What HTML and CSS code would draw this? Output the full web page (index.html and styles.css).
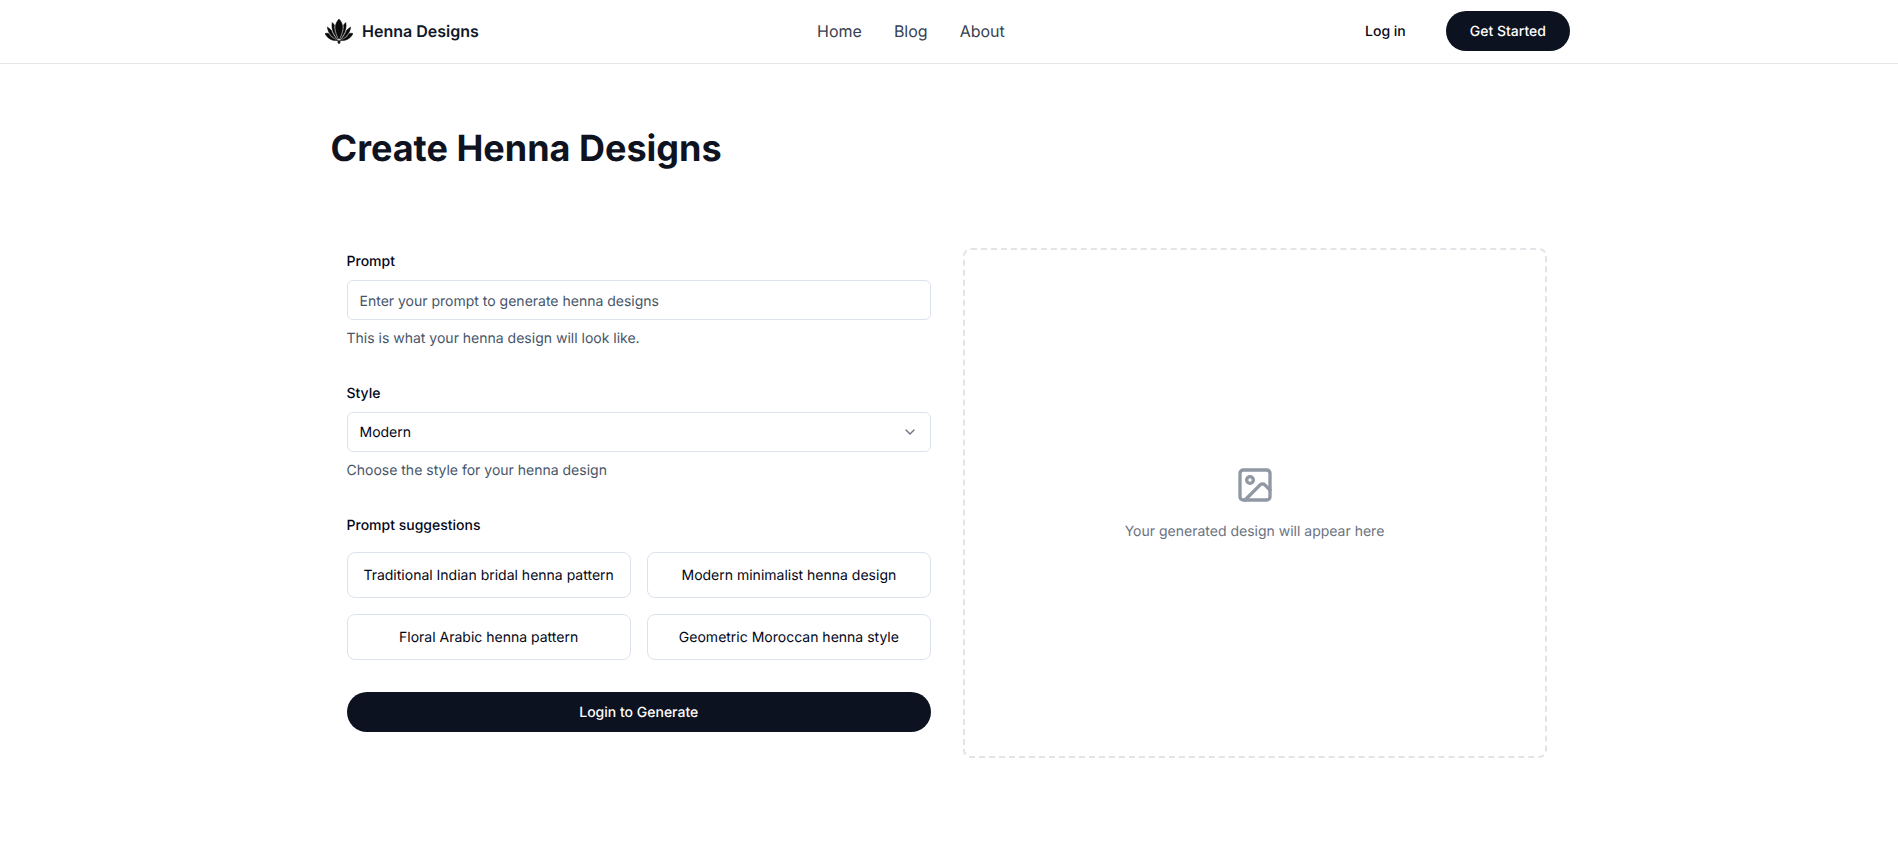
FILE: index.html
```html
<!DOCTYPE html>
<html lang="en">
<head>
<meta charset="utf-8">
<title>Henna Designs</title>
<link rel="stylesheet" href="styles.css">
</head>
<body>
<header class="site-header">
  <div class="nav">
    <a class="brand" href="#">
      <svg class="brand-icon" viewBox="0 0 28 25" aria-hidden="true">
        <path d="M14 0C11.500 2.500 10.200 5.500 10.400 9C10.600 13 12.400 17 13.700 20H14.300C15.600 17 17.400 13 17.600 9C17.800 5.500 16.500 2.500 14 0Z"/>
        <path d="M7.200 3.500C6.400 7.500 7.200 12 9.500 15.500C10.500 17.200 11.700 18.800 12.800 20.300C11.200 16.500 9.500 12.500 9.300 8.800C9.200 8 9.300 7 9.500 6.200C8.900 5.200 8.100 4.300 7.200 3.500Z"/>
        <path d="M20.800 3.500C21.600 7.500 20.800 12 18.500 15.500C17.500 17.200 16.300 18.800 15.200 20.300C16.800 16.500 18.500 12.500 18.700 8.800C18.800 8 18.700 7 18.500 6.200C19.100 5.200 19.900 4.300 20.800 3.500Z"/>
        <path d="M2.300 8C2.600 11.500 4.500 15 7.300 17.500C8.800 18.900 10.600 20 12.200 20.800C10 18.300 7.600 15 6.300 11.200C5.200 10 3.800 8.900 2.300 8Z"/>
        <path d="M25.700 8C25.400 11.500 23.500 15 20.700 17.500C19.200 18.900 17.400 20 15.800 20.800C18 18.300 20.400 15 21.700 11.200C22.800 10 24.200 8.900 25.700 8Z"/>
        <path d="M0 14.500C1.400 17.800 4.300 20.300 7.800 21.200C9.700 21.700 11.500 21.700 13 21.400C9.500 20.500 5.800 18 3.600 14.400C2.400 14.200 1.200 14.200 0 14.500Z"/>
        <path d="M28 14.500C26.600 17.800 23.700 20.300 20.200 21.200C18.300 21.700 16.500 21.700 15 21.400C18.500 20.500 22.200 18 24.400 14.400C25.600 14.200 26.800 14.200 28 14.500Z"/>
        <path d="M14 21L12.600 22.900L14 25L15.400 22.900Z"/>
      </svg>
      <span>Henna Designs</span>
    </a>
    <nav class="nav-links">
      <a href="#">Home</a>
      <a href="#">Blog</a>
      <a href="#">About</a>
    </nav>
    <div class="nav-actions">
      <a class="login" href="#">Log in</a>
      <a class="get-started" href="#">Get Started</a>
    </div>
  </div>
</header>
<main class="page">
  <h1 class="title">Create Henna Designs</h1>
  <div class="columns">
    <form class="form">
      <div class="field">
        <label class="label" for="prompt">Prompt</label>
        <input class="control" id="prompt" type="text" placeholder="Enter your prompt to generate henna designs">
        <p class="hint">This is what your henna design will look like.</p>
      </div>
      <div class="field">
        <span class="label">Style</span>
        <div class="control select">
          <span>Modern</span>
          <svg class="chevron" viewBox="0 0 24 24" aria-hidden="true"><path d="m6 9 6 6 6-6"/></svg>
        </div>
        <p class="hint">Choose the style for your henna design</p>
      </div>
      <div class="suggestions-block">
        <span class="label suggestions-label">Prompt suggestions</span>
        <div class="suggestions">
          <button class="chip" type="button">Traditional Indian bridal henna pattern</button>
          <button class="chip" type="button">Modern minimalist henna design</button>
          <button class="chip" type="button">Floral Arabic henna pattern</button>
          <button class="chip" type="button">Geometric Moroccan henna style</button>
        </div>
      </div>
      <button class="submit" type="button">Login to Generate</button>
    </form>
    <section class="preview">
      <svg class="preview-icon" viewBox="0 0 24 24" aria-hidden="true">
        <rect x="3" y="3" width="18" height="18" rx="2"/>
        <circle cx="9" cy="9" r="2"/>
        <path d="m21 15-3.086-3.086a2 2 0 0 0-2.828 0L6 21"/>
      </svg>
      <p class="preview-text">Your generated design will appear here</p>
    </section>
  </div>
</main>
</body>
</html>
```
FILE: styles.css
```css
* { box-sizing: border-box; text-rendering: geometricPrecision; }
html, body { margin: 0; padding: 0; }
body {
  background: #fff;
  color: #0c1220;
  font-family: Inter, "Liberation Sans", sans-serif;
  font-size: 14px;
  min-height: 848px;
}
a { color: inherit; text-decoration: none; }
.site-header {
  height: 64px;
  border-bottom: 1px solid #e5e7eb;
}
.nav {
  width: 1245px;
  height: 62px;
  margin-left: 325px;
  display: flex;
  justify-content: space-between;
  align-items: center;
}
.brand {
  display: flex;
  align-items: center;
  gap: 9px;
  padding-right: 2px;
  font-size: 16px;
  font-weight: 600;
  color: #0f172a;
}
.brand-icon { width: 28px; height: 25px; fill: #0a0a0a; stroke: #0a0a0a; stroke-width: 0.5; }
.nav-links {
  display: flex;
  gap: 32px;
  font-size: 16px;
  color: #374151;
}
.nav-actions {
  display: flex;
  align-items: center;
  gap: 16px;
  font-weight: 500;
  color: #020617;
}
.login {
  padding: 0 24px;
  height: 40px;
  display: flex;
  align-items: center;
}
.get-started {
  height: 40px;
  padding: 0 24px;
  display: flex;
  align-items: center;
  border-radius: 999px;
  background: #0c1220;
  color: #fff;
}
.page {
  width: 1232.5px;
  margin-left: 330.5px;
}
.title {
  margin: 0;
  padding-top: 64px;
  font-size: 36px;
  line-height: 40px;
  font-weight: 700;
  color: #0f131f;
}
.columns {
  display: grid;
  grid-template-columns: 584.5px 584px;
  gap: 32px;
  padding: 80px 16px 0;
}
.form {
  display: flex;
  flex-direction: column;
  padding-top: 3px;
}
.field { margin-bottom: 34px; }
.label {
  display: block;
  padding-top: 1px;
  font-size: 14px;
  line-height: 20px;
  font-weight: 500;
  color: #020617;
  margin: 0 0 8px;
}
.suggestions-label { margin-bottom: 16px; }
.control {
  display: block;
  width: 100%;
  height: 40px;
  padding: 2px 12px 0;
  border: 1px solid #dde3ee;
  border-radius: 6px;
  background: #fff;
  color: #020617;
  font: 400 14px Inter, "Liberation Sans", sans-serif;
}
.control::placeholder { color: #475569; opacity: 1; }
.select {
  display: flex;
  align-items: center;
  justify-content: space-between;
  padding-top: 0;
}
.chevron {
  width: 16px;
  height: 16px;
  fill: none;
  stroke: #6b7280;
  stroke-width: 2;
  stroke-linecap: round;
  stroke-linejoin: round;
}
.hint {
  margin: 9px 0 0;
  font-size: 14px;
  line-height: 20px;
  color: #475569;
}
.suggestions-block { margin-bottom: 32px; }
.suggestions {
  display: grid;
  grid-template-columns: 1fr 1fr;
  gap: 16px;
}
.chip {
  height: 46px;
  padding: 0 8px;
  border: 1px solid #dde3ee;
  border-radius: 8px;
  background: #fff;
  color: #020617;
  font: 400 14px Inter, "Liberation Sans", sans-serif;
  white-space: nowrap;
}
.submit {
  height: 40px;
  border: 0;
  border-radius: 999px;
  background: #0c1220;
  color: #fff;
  font: 500 14px Inter, "Liberation Sans", sans-serif;
}
.preview {
  height: 510px;
  padding-right: 1px;
  border: 2px dashed #e2e4e8;
  border-radius: 8px;
  display: flex;
  flex-direction: column;
  align-items: center;
  justify-content: center;
  gap: 17px;
}
.preview-icon {
  width: 40px;
  height: 40px;
  fill: none;
  stroke: #9098a4;
  stroke-width: 2;
  stroke-linecap: round;
  stroke-linejoin: round;
}
.preview-text {
  margin: 0 0 -1px;
  font-size: 14px;
  line-height: 20px;
  color: #6b7280;
}
```
